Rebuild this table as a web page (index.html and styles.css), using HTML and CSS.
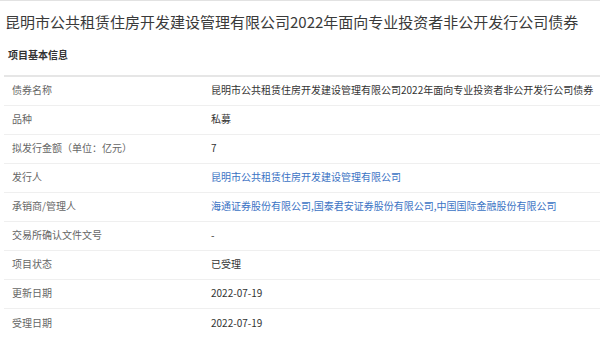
FILE: index.html
```html
<!DOCTYPE html>
<html lang="zh-CN">
<head>
<meta charset="utf-8">
<title>项目基本信息</title>
<link rel="stylesheet" href="styles.css">
</head>
<body>
<div class="page">
  <h1 class="title">昆明市公共租赁住房开发建设管理有限公司2022年面向专业投资者非公开发行公司债券</h1>
  <h2 class="section">项目基本信息</h2>
  <div class="info">
    <div class="row"><div class="label">债券名称</div><div class="value">昆明市公共租赁住房开发建设管理有限公司2022年面向专业投资者非公开发行公司债券</div></div>
    <div class="row"><div class="label">品种</div><div class="value">私募</div></div>
    <div class="row"><div class="label">拟发行金额（单位：亿元）</div><div class="value">7</div></div>
    <div class="row"><div class="label">发行人</div><div class="value link">昆明市公共租赁住房开发建设管理有限公司</div></div>
    <div class="row"><div class="label">承销商/管理人</div><div class="value link">海通证券股份有限公司,国泰君安证券股份有限公司,中国国际金融股份有限公司</div></div>
    <div class="row"><div class="label">交易所确认文件文号</div><div class="value">-</div></div>
    <div class="row"><div class="label">项目状态</div><div class="value">已受理</div></div>
    <div class="row"><div class="label">更新日期</div><div class="value">2022-07-19</div></div>
    <div class="row last"><div class="label">受理日期</div><div class="value">2022-07-19</div></div>
  </div>
</div>
</body>
</html>
```

FILE: styles.css
```css
* { box-sizing: border-box; }
html, body { margin: 0; padding: 0; background: #fff; }
body {
  font-family: "Noto Sans CJK SC", "Noto Sans", sans-serif;
  color: #333;
}
.page {
  border-top: 1px solid #e2e2e2;
}
.title {
  margin: 11px 0 0 0;
  padding-left: 5px;
  font-size: 15px;
  line-height: 20px;
  font-weight: normal;
  color: #3a3a3a;
  white-space: nowrap;
}
.section {
  margin: 16px 0 0 0;
  padding-left: 8px;
  font-size: 10px;
  line-height: 14px;
  font-weight: bold;
  color: #333;
}
.info {
  margin: 13px 0 0 4px;
  border-top: 2px solid #e6e6e6;
}
.row {
  display: flex;
  align-items: center;
  height: 29px;
  border-bottom: 1px solid #efefef;
  font-size: 10px;
  line-height: 14px;
  padding-bottom: 2px;
}
.row.last { border-bottom: none; }
.label {
  width: 207px;
  padding-left: 8px;
  color: #666;
  flex: none;
}
.value {
  color: #333;
  white-space: nowrap;
}
.value.link { color: #3b73c4; }
```
